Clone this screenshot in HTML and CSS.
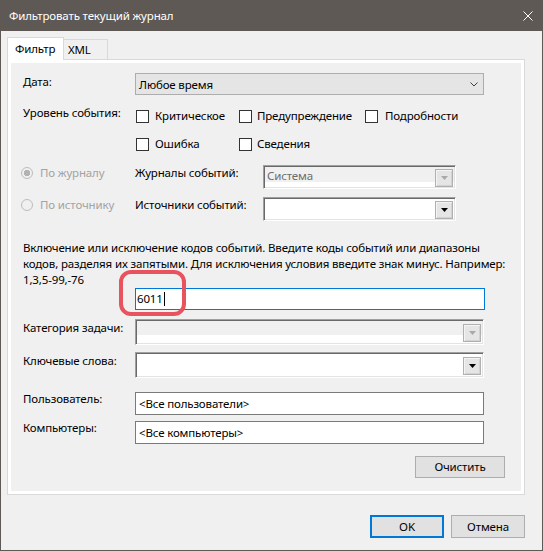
FILE: index.html
```html
<!DOCTYPE html>
<html lang="ru">
<head>
<meta charset="utf-8">
<title>Фильтровать текущий журнал</title>
<link rel="stylesheet" href="styles.css">
</head>
<body>
<div class="window">
  <div class="titlebar">
    <span class="title">Фильтровать текущий журнал</span>
    <svg class="close" width="10" height="10" viewBox="0 0 10 10"><path d="M0.5 0.5 L9.5 9.5 M9.5 0.5 L0.5 9.5" stroke="#ffffff" stroke-width="1" fill="none"/></svg>
  </div>
  <div class="body">
    <div class="tabs">
      <div class="tab active">Фильтр</div>
      <div class="tab xml">XML</div>
    </div>
    <div class="panel">
      <div class="inner">
        <div class="row row-date">
          <span class="label lbl-date">Дата:</span>
          <div class="combo-flat">
            <span>Любое время</span>
            <svg class="chev" width="8" height="5" viewBox="0 0 8 5"><path d="M0.5 0.5 L4 4 L7.5 0.5" fill="none" stroke="#404040" stroke-width="1"/></svg>
          </div>
        </div>
        <div class="row row-lvl1">
          <span class="label lbl-lvl">Уровень события:</span>
          <div class="checks">
            <label class="chk w1"><span class="cb"></span>Критическое</label>
            <label class="chk w2"><span class="cb"></span>Предупреждение</label>
            <label class="chk w3"><span class="cb"></span>Подробности</label>
          </div>
        </div>
        <div class="row row-lvl2">
          <span class="label"></span>
          <div class="checks">
            <label class="chk w1"><span class="cb"></span>Ошибка</label>
            <label class="chk w2"><span class="cb"></span>Сведения</label>
          </div>
        </div>
        <div class="row row-src1">
          <label class="radio"><span class="rb checked"></span>По журналу</label>
          <span class="label lbl-mid">Журналы событий:</span>
          <div class="combo3d small disabled">
            <span class="val">Система</span>
            <span class="dd"><svg width="7" height="4" viewBox="0 0 7 4"><path d="M0 0 H7 L3.5 4 Z" fill="#a9a9a9"/></svg></span>
          </div>
        </div>
        <div class="row row-src2">
          <label class="radio"><span class="rb"></span>По источнику</label>
          <span class="label lbl-mid">Источники событий:</span>
          <div class="combo3d small white">
            <span class="val"></span>
            <span class="dd"><svg width="7" height="4" viewBox="0 0 7 4"><path d="M0 0 H7 L3.5 4 Z" fill="#000"/></svg></span>
          </div>
        </div>
        <p class="para">Включение или исключение кодов событий. Введите коды событий или диапазоны<br>кодов, разделяя их запятыми. Для исключения условия введите знак минус. Например:<br>1,3,5-99,-76</p>
        <div class="row row-ids">
          <div class="edit focus"><span>6011</span><span class="caret"></span></div>
        </div>
        <div class="row row-cat">
          <span class="label lbl-down">Категория задачи:</span>
          <div class="combo3d wide disabled tall">
            <span class="val"></span>
            <span class="dd"><svg width="7" height="4" viewBox="0 0 7 4"><path d="M0 0 H7 L3.5 4 Z" fill="#a9a9a9"/></svg></span>
          </div>
        </div>
        <div class="row row-kw">
          <span class="label lbl-down">Ключевые слова:</span>
          <div class="combo3d wide white">
            <span class="val"></span>
            <span class="dd"><svg width="7" height="4" viewBox="0 0 7 4"><path d="M0 0 H7 L3.5 4 Z" fill="#000"/></svg></span>
          </div>
        </div>
        <div class="row row-user">
          <span class="label lbl-up">Пользователь:</span>
          <div class="edit">&lt;Все пользователи&gt;</div>
        </div>
        <div class="row row-comp">
          <span class="label lbl-up">Компьютеры:</span>
          <div class="edit">&lt;Все компьютеры&gt;</div>
        </div>
        <div class="row row-clear">
          <button class="btn clear">Очистить</button>
        </div>
      </div>
    </div>
    <div class="buttons">
      <button class="btn ok">OK</button>
      <button class="btn">Отмена</button>
    </div>
  </div>
  <div class="highlight"></div>
</div>
</body>
</html>
```

FILE: styles.css
```css
* { box-sizing: border-box; }
html, body { margin: 0; padding: 0; }
body {
  font-family: "Noto Sans", "Open Sans", sans-serif;
  font-size: 11.5px;
  letter-spacing: -0.15px;
  line-height: 16px;
  color: #000;
  background: #f0f0f0;
}
.window {
  position: relative;
  width: 543px;
  height: 551px;
  border: 1px solid #5e5955;
  border-top: none;
  background: #f0f0f0;
  display: flex;
  flex-direction: column;
}
.titlebar {
  height: 31px;
  flex: none;
  background: #5e5955;
  color: #fff;
  display: flex;
  align-items: center;
  justify-content: space-between;
  padding: 0 9px 0 8px;
}
.title { font-size: 11.5px; }
.close { display: block; }
.body { padding: 6px 17px 0 6px; }

.tabs { display: flex; align-items: flex-end; height: 22px; }
.tab {
  height: 20px;
  border: 1px solid #d9d9d9;
  border-bottom: none;
  background: #f0f0f0;
  line-height: 19px;
}
.tab.active {
  position: relative;
  z-index: 1;
  width: 57px;
  height: 23px;
  margin-bottom: -1px;
  background: #fff;
  padding-left: 7px;
  line-height: 21px;
}
.tab.xml { width: 44px; border-left: none; padding-left: 4px; }

.panel {
  height: 436px;
  border: 1px solid #d9d9d9;
  background: #fff;
  padding: 3px;
}
.inner {
  height: 100%;
  background: #f0f0f0;
  padding: 10px 0 0 12px;
  display: flex;
  flex-direction: column;
}
.row { display: flex; align-items: flex-start; flex: none; }
.label { width: 112px; flex: none; white-space: nowrap; }
.lbl-date { margin-top: 1px; }
.lbl-lvl { margin-top: -1px; }
.lbl-mid { width: 128px; }
.lbl-down { margin-top: 1px; }
.lbl-up { margin-top: -1px; }

.row-date { height: 22px; }
.row-lvl1 { margin-top: 11px; height: 20px; }
.row-lvl2 { margin-top: 8px; height: 20px; }
.row-src1 { margin-top: 11px; height: 24px; }
.row-src2 { margin-top: 8px; height: 24px; }
.para { margin: 19px 0 0 0; height: 48px; white-space: nowrap; }
.row-ids { height: 22px; padding-left: 112px; }
.row-cat { margin-top: 9px; height: 26px; }
.row-kw { margin-top: 7px; height: 26px; }
.row-user { margin-top: 14px; height: 23px; }
.row-comp { margin-top: 6px; height: 23px; }
.row-clear { margin-top: 12px; justify-content: flex-end; padding-right: 16px; }

.combo-flat {
  width: 349px;
  height: 22px;
  background: #e5e5e5;
  border: 1px solid #adadad;
  display: flex;
  align-items: center;
  justify-content: space-between;
  padding: 1px 5px 0 3px;
}
.chev { display: block; margin-top: -1px; }

.checks { display: flex; height: 20px; align-items: center; }
.chk { display: flex; align-items: center; white-space: nowrap; }
.w1 { width: 104px; padding-left: 1px; }
.w2 { width: 126px; }
.w3 { padding-left: 0; }
.cb {
  width: 13px;
  height: 13px;
  border: 1px solid #333;
  background: #fff;
  margin-right: 6px;
  flex: none;
}
.w2 .cb { margin-right: 5px; }
.w3 .cb { margin-right: 7px; }

.radio {
  width: 114px;
  margin-left: -2px;
  display: flex;
  align-items: center;
  height: 16px;
  color: #a3a3a3;
  white-space: nowrap;
}
.rb {
  width: 12px;
  height: 12px;
  border-radius: 50%;
  border: 1px solid #bcbcbc;
  background: #f0f0f0;
  margin-right: 7px;
  flex: none;
}
.rb.checked { background: radial-gradient(circle, #b3b3b3 0 3px, #f0f0f0 3.5px); }

.combo3d {
  height: 24px;
  border-top: 1px solid #a0a0a0;
  border-left: 1px solid #a0a0a0;
  border-right: 1px solid #fff;
  border-bottom: 1px solid #fff;
  box-shadow: inset 1px 1px 0 #696969, inset -1px -1px 0 #e3e3e3;
  display: flex;
  align-items: center;
  justify-content: space-between;
  padding: 1px 2px 0 2px;
}
.combo3d.small { width: 193px; }
.combo3d.wide { width: 349px; height: 26px; }
.combo3d.white { background: #fff; }
.combo3d.disabled { background: linear-gradient(#f0f0f0 calc(100% - 6px), #fff 0); }
.combo3d.disabled.tall { background: linear-gradient(#f0f0f0 calc(100% - 9px), #fff 0); }
.val { color: #6d6d6d; padding-left: 1px; align-self: flex-start; margin-top: 1px; }
.dd {
  width: 18px;
  height: 18px;
  border: 1px solid #b0b0b0;
  box-shadow: inset 1px 1px 0 #f4f4f4, inset -1px -1px 0 #d2d2d2;
  background: #e5e5e5;
  display: flex;
  align-items: center;
  justify-content: center;
}
.dd svg { display: block; }

.edit {
  width: 349px;
  height: 23px;
  background: #fff;
  border: 1px solid #7a7a7a;
  padding: 0 0 0 3px;
  display: flex;
  align-items: center;
  white-space: nowrap;
}
.edit.focus { height: 22px; width: 350px; border-color: #0078d7; padding-left: 1px; }
.caret { width: 1px; height: 14px; background: #000; margin-left: 1px; }

.btn {
  font: inherit;
  letter-spacing: inherit;
  color: #000;
  background: #e1e1e1;
  border: 1px solid #adadad;
  padding: 0;
  height: 23px;
  width: 74px;
}
.btn.clear { width: 90px; height: 22px; }
.btn.ok { border: 2px solid #0078d7; }
.buttons {
  margin-top: 20px;
  display: flex;
  justify-content: flex-end;
  gap: 7px;
}

.highlight {
  position: absolute;
  left: 118px;
  top: 270px;
  width: 67px;
  height: 46px;
  border: 4px solid #e8545e;
  border-radius: 12px;
}
```
